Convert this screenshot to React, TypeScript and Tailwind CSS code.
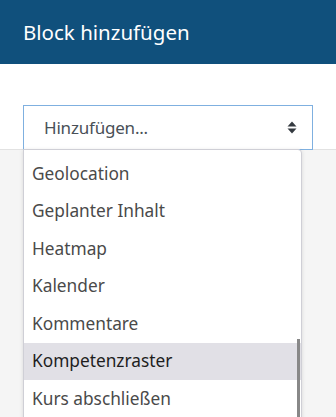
const items = [
  "Geolocation",
  "Geplanter Inhalt",
  "Heatmap",
  "Kalender",
  "Kommentare",
  "Kompetenzraster",
  "Kurs abschließen",
];

function SortIcon() {
  return (
    <svg width="10" height="13" viewBox="0 0 10 13" className="shrink-0">
      <path d="M5 0.5 L9.5 5.5 H0.5 Z" fill="#343a40" />
      <path d="M5 12.5 L9.5 7.5 H0.5 Z" fill="#343a40" />
    </svg>
  );
}

export default function App() {
  return (
    <div
      className="w-[336px] h-[417px] overflow-hidden bg-white relative"
      style={{ fontFamily: '"Noto Sans", "Open Sans", sans-serif' }}
    >
      {/* Header */}
      <div className="h-[64px] bg-[#10507c] flex items-center px-[23px]">
        <h1 className="text-[20.5px] text-white font-normal">Block hinzufügen</h1>
      </div>

      {/* Body */}
      <div className="pt-[41px] px-[23px] h-[65px]">
        <div className="relative z-10 h-[45px] w-[290px] border border-[#7fb0e0] flex items-center justify-between pl-[20px] pr-[15px] bg-white">
          <span className="text-[17px] text-[#495057] tracking-[-0.2px]">Hinzufügen...</span>
          <SortIcon />
        </div>
      </div>

      {/* Footer area */}
      <div className="mt-[20px] h-full bg-[#f5f5f5] border-t border-[#e2e2e2]" />

      {/* Dropdown list */}
      <div className="absolute left-[23px] top-[149px] w-[279px] h-[280px] bg-white border border-[#cfcfd6] rounded-tr-[4px] shadow-[0_1px_4px_rgba(0,0,0,0.12)] z-20 pt-[5px] overflow-hidden">
        {items.map((item) => (
          <div
            key={item}
            className={
              item === "Kompetenzraster"
                ? "h-[37.5px] flex items-center px-[8px] text-[17.3px] bg-[#e1e0e6] text-[#1e1e1e]"
                : "h-[37.5px] flex items-center px-[8px] text-[17.3px] text-[#4a4a4a]"
            }
          >
            {item}
          </div>
        ))}
        <div className="absolute left-[273px] top-[189px] w-[3px] h-[100px] bg-[#888888]" />
      </div>
    </div>
  );
}
